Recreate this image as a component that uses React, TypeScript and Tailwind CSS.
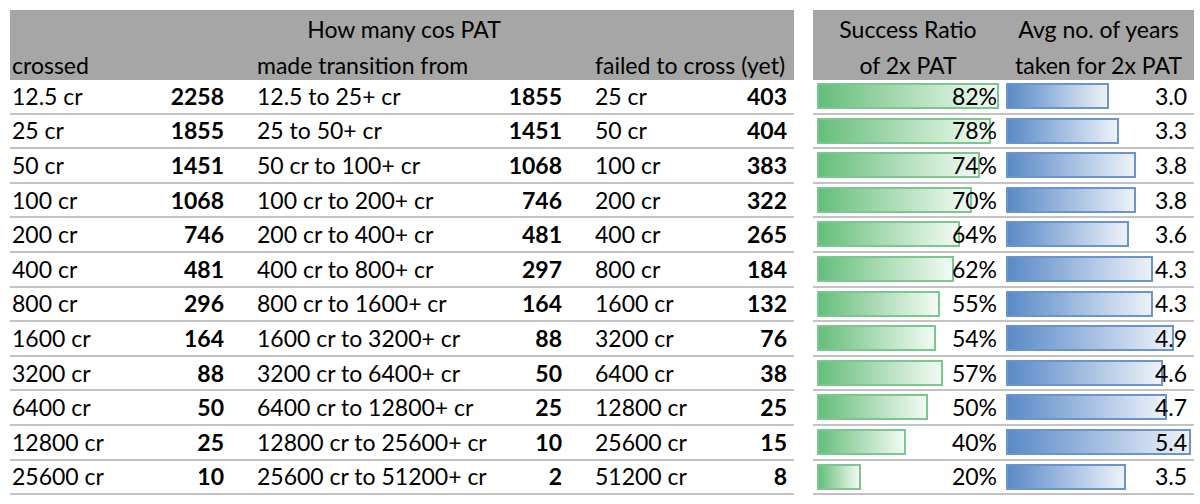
import React from "react";

type Row = [string, number, string, number, string, number, number, number];

const rows: Row[] = [
  ["12.5 cr", 2258, "12.5 to 25+ cr", 1855, "25 cr", 403, 82, 3.0],
  ["25 cr", 1855, "25 to 50+ cr", 1451, "50 cr", 404, 78, 3.3],
  ["50 cr", 1451, "50 cr to 100+ cr", 1068, "100 cr", 383, 74, 3.8],
  ["100 cr", 1068, "100 cr to 200+ cr", 746, "200 cr", 322, 70, 3.8],
  ["200 cr", 746, "200 cr to 400+ cr", 481, "400 cr", 265, 64, 3.6],
  ["400 cr", 481, "400 cr to 800+ cr", 297, "800 cr", 184, 62, 4.3],
  ["800 cr", 296, "800 cr to 1600+ cr", 164, "1600 cr", 132, 55, 4.3],
  ["1600 cr", 164, "1600 cr to 3200+ cr", 88, "3200 cr", 76, 54, 4.9],
  ["3200 cr", 88, "3200 cr to 6400+ cr", 50, "6400 cr", 38, 57, 4.6],
  ["6400 cr", 50, "6400 cr to 12800+ cr", 25, "12800 cr", 25, 50, 4.7],
  ["12800 cr", 25, "12800 cr to 25600+ cr", 10, "25600 cr", 15, 40, 5.4],
  ["25600 cr", 10, "25600 cr to 51200+ cr", 2, "51200 cr", 8, 20, 3.5],
];

export default function App() {
  return (
    <div
      className="w-[1200px] h-[504px] bg-white text-black flex pt-[10px] pl-[10px] text-[23px] leading-none"
      style={{ fontFamily: "Lato, 'Open Sans', sans-serif" }}
    >
      {/* Left table */}
      <div className="w-[784px] flex flex-col">
        <div className="h-[70px] bg-[#a6a6a6] flex flex-col">
          <div className="h-[35px] flex items-center justify-center pl-[4px] pt-[3px]">How many cos PAT</div>
          <div className="h-[35px] flex items-center pt-[6px]">
            <div className="w-[220px] pl-[2px]">crossed</div>
            <div className="w-[338px] pl-[27px]">made transition from</div>
            <div className="flex-1 pl-[27px]">failed to cross (yet)</div>
          </div>
        </div>
        {rows.map((r, i) => (
          <div key={i} className="h-[34.6px] border-b-2 border-[#c3c3c3] flex items-center">
            <div className="w-[220px] pl-[2px] pr-[6px] flex justify-between">
              <span>{r[0]}</span>
              <span className="font-bold">{r[1]}</span>
            </div>
            <div className="w-[338px] pl-[27px] pr-[6px] flex justify-between">
              <span>{r[2]}</span>
              <span className="font-bold">{r[3]}</span>
            </div>
            <div className="flex-1 pl-[27px] pr-[7px] flex justify-between">
              <span>{r[4]}</span>
              <span className="font-bold">{r[5]}</span>
            </div>
          </div>
        ))}
      </div>
      {/* Right table */}
      <div className="w-[381px] ml-[19px] flex flex-col">
        <div className="h-[70px] bg-[#a6a6a6] flex">
          <div className="w-[190px] flex flex-col items-center">
            <div className="h-[35px] flex items-center pt-[3px]">Success Ratio</div>
            <div className="h-[35px] flex items-center pt-[6px]">of 2x PAT</div>
          </div>
          <div className="flex-1 flex flex-col items-center">
            <div className="h-[35px] flex items-center pt-[3px]">Avg no. of years</div>
            <div className="h-[35px] flex items-center pt-[6px]">taken for 2x PAT</div>
          </div>
        </div>
        {rows.map((r, i) => {
          const ratio = r[3] / r[1];
          return (
            <div key={i} className="h-[34.6px] border-b-2 border-[#c3c3c3] flex">
              <div className="w-[190px] relative flex items-center justify-end pr-[6px]">
                <div
                  className="absolute left-[4px] top-[3px] h-[26px] border-2 border-[#7cc68f] bg-gradient-to-r from-[#63be7b] to-[#f2faf4]"
                  style={{ width: `${ratio * 222}px` }}
                />
                <span className="relative">{Math.round(ratio * 100)}%</span>
              </div>
              <div className="flex-1 relative flex items-center justify-end pr-[7px]">
                <div
                  className="absolute left-[3px] top-[3px] h-[26px] border-2 border-[#6b93cc] bg-gradient-to-r from-[#5a8ac6] to-[#eef2f9]"
                  style={{ width: `${r[7] * 34.2}px` }}
                />
                <span className="relative">{r[7].toFixed(1)}</span>
              </div>
            </div>
          );
        })}
      </div>
    </div>
  );
}
